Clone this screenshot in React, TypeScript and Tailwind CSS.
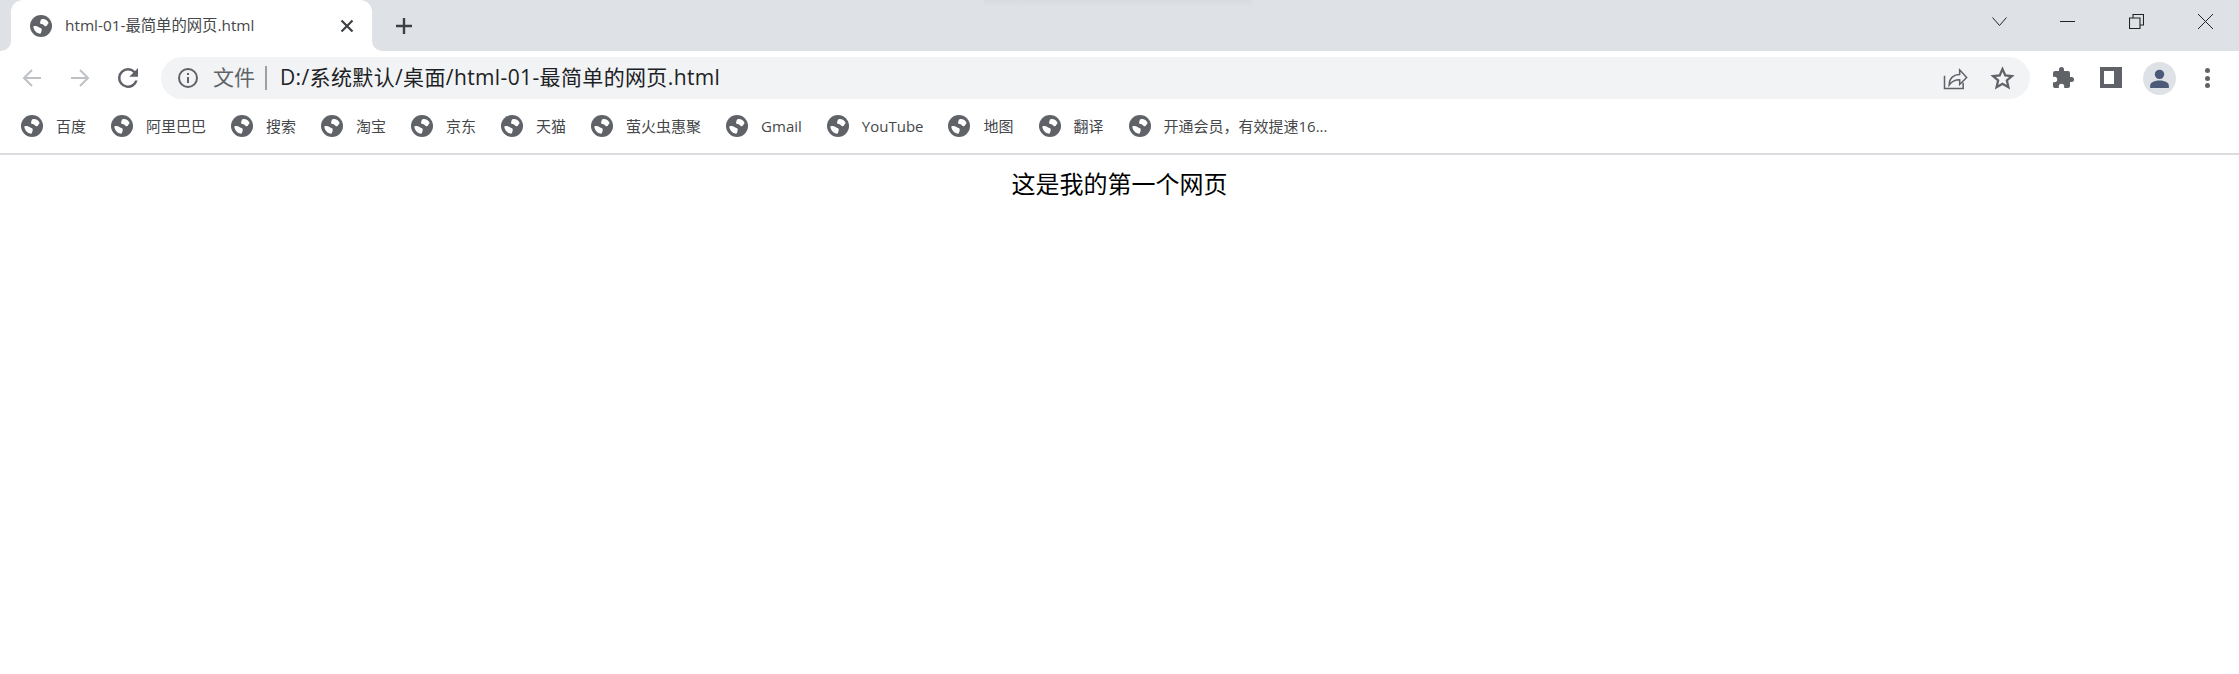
const FONT = { fontFamily: '"Open Sans", "Noto Sans CJK SC", sans-serif' };

const bookmarks = [
  "百度",
  "阿里巴巴",
  "搜索",
  "淘宝",
  "京东",
  "天猫",
  "萤火虫惠聚",
  "Gmail",
  "YouTube",
  "地图",
  "翻译",
  "开通会员，有效提速16...",
];

function Globe({ className }: { className: string }) {
  return (
    <svg viewBox="0 0 24 24" className={className}>
      <circle cx="12" cy="12" r="12" fill="#5f6368" />
      <path
        fill="#fff"
        d="M12.500 4.500c3.500-.6 6.500 1 7.800 4.200l-2.300 3.300c-1.300.6-2.500-.6-3.500-1.500-.8-.7-2.800-.3-3.300-1.300-.5-1.200.3-3.800 1.300-4.700z"
      />
      <path
        fill="#fff"
        d="M3.600 12.500c1.800-.9 4.200-.6 5.500.5 1.200 1 3.300.9 3.600 2.300.3 1.500-.4 4.400-1.400 5.100-3.900-.2-7.300-3.600-7.700-7.900z"
      />
    </svg>
  );
}

function TabStrip() {
  return (
    <div className="relative flex h-[51px] bg-[#dee1e6]">
      <div className="absolute left-[984px] top-0 h-[7px] w-[268px] bg-linear-to-b from-[#d8dbe0] to-transparent" />
      <div className="relative ml-[11px] flex h-[51px] w-[361px] items-center rounded-t-[12px] bg-white pl-[19px]">
        <span className="absolute bottom-0 -left-[10px] h-[10px] w-[10px] bg-white">
          <span className="block h-full w-full rounded-br-[10px] bg-[#dee1e6]" />
        </span>
        <span className="absolute bottom-0 -right-[10px] h-[10px] w-[10px] bg-white">
          <span className="block h-full w-full rounded-bl-[10px] bg-[#dee1e6]" />
        </span>
        <Globe className="h-[22px] w-[22px]" />
        <span className="ml-[13px] text-[15.35px] text-[#45474a]">html-01-最简单的网页.html</span>
        <svg viewBox="0 0 16 16" className="ml-auto mr-[17px] h-4 w-4" stroke="#3c4043" strokeWidth="2.2" fill="none">
          <path d="M2.500 2.500l11 11M13.500 2.500l-11 11" />
        </svg>
      </div>
      <svg viewBox="0 0 20 20" className="ml-[22px] mt-[16px] h-5 w-5" stroke="#3c4043" strokeWidth="2.4" fill="none">
        <path d="M10 2v16M2 10h16" />
      </svg>
      <div className="ml-auto flex h-[51px]">
        <svg viewBox="0 0 15 9" className="mr-[53px] mt-[17px] h-[9px] w-[15px]" stroke="#222" strokeWidth="1" fill="none">
          <path d="M.5 .5L7.500 8.500l7-8" />
        </svg>
        <svg viewBox="0 0 15 15" className="mr-[54px] mt-[14px] h-[15px] w-[15px]" stroke="#222" strokeWidth="1" fill="none">
          <path d="M0 7.500h15" />
        </svg>
        <svg viewBox="0 0 15 15" className="mr-[54px] mt-[14px] h-[15px] w-[15px]" stroke="#222" strokeWidth="1.100" fill="none">
          <path d="M.5 4h10.500v10.500H.5zM4 4V.5h10.500V11H11" />
        </svg>
        <svg viewBox="0 0 15 15" className="mr-[26px] mt-[14px] h-[15px] w-[15px]" stroke="#222" strokeWidth="1" fill="none">
          <path d="M0 0l15 15M15 0L0 15" />
        </svg>
      </div>
    </div>
  );
}

function Toolbar() {
  return (
    <div className="flex h-[48px] items-start bg-white pt-[6px]">
      <svg viewBox="0 0 20 20" className="ml-[22px] mt-[11px] h-5 w-5" stroke="#bdc1c6" strokeWidth="2" fill="none">
        <path d="M19 10H2M10 2l-8 8 8 8" />
      </svg>
      <svg viewBox="0 0 20 20" className="ml-[28px] mt-[11px] h-5 w-5" stroke="#bdc1c6" strokeWidth="2" fill="none">
        <path d="M1 10h17M10 2l8 8-8 8" />
      </svg>
      <svg viewBox="0 0 24 24" className="ml-[23px] mt-[6px] h-[30px] w-[30px]" fill="#5f6368">
        <path d="M17.650 6.350A7.960 7.960 0 0 0 12 4a8 8 0 1 0 7.730 10h-2.080A6 6 0 1 1 12 6c1.660 0 3.140.69 4.220 1.780L13 11h7V4l-2.350 2.350z" />
      </svg>
      <div className="ml-[18px] flex h-[42px] w-[1869px] items-center rounded-full bg-[#f1f3f4] pl-[15px]">
        <svg viewBox="0 0 24 24" className="h-[24px] w-[24px]" fill="none" stroke="#5f6368" strokeWidth="2">
          <circle cx="12" cy="12" r="9" />
          <path d="M12 11v6M12 7v2" />
        </svg>
        <span className="ml-[13px] text-[21px] text-[#5f6368]">文件</span>
        <span className="ml-[10px] h-[24px] w-[2px] bg-[#9aa0a6]" />
        <span className="ml-[13px] text-[21px] tracking-[0.37px] text-[#202124]">D:/系统默认/桌面/html-01-最简单的网页.html</span>
        <svg viewBox="0 0 24 24" className="ml-auto h-[28px] w-[28px]" fill="none" stroke="#5f6368" strokeWidth="1.300">
          <path d="M3 10v11h16v-5M7 18c0-6 4-9 9-9V5l6 6.500-6 6v-4c-4 0-7 1.500-9 4.500z" />
        </svg>
        <svg viewBox="0 0 24 24" className="ml-[21px] mr-[15px] h-[25px] w-[25px]" fill="none" stroke="#5f6368" strokeWidth="2.200">
          <path d="M12 3l2.700 6.100 6.300.6-4.800 4.200 1.500 6.400L12 17l-5.700 3.300 1.500-6.400L3 9.700l6.300-.6z" />
        </svg>
      </div>
      <svg viewBox="0 0 24 24" className="ml-[21px] mt-[9px] h-[24px] w-[24px]" fill="#5f6368">
        <path d="M20.500 11H19V7a2 2 0 0 0-2-2h-4V3.500a2.500 2.500 0 0 0-5 0V5H4a2 2 0 0 0-2 2v3.800h1.500a2.700 2.700 0 0 1 0 5.400H2V20a2 2 0 0 0 2 2h3.800v-1.500a2.700 2.700 0 0 1 5.400 0V22H17a2 2 0 0 0 2-2v-4h1.500a2.500 2.500 0 0 0 0-5z" />
      </svg>
      <div className="ml-[25px] mt-[10px] h-[21px] w-[22px] border-[4px] border-r-[8px] border-[#5f6368] bg-white" />
      <div className="ml-[21px] mt-[5px] flex h-[33px] w-[33px] items-center justify-center rounded-full bg-[#dee1e6]">
        <svg viewBox="0 0 24 24" className="h-[25px] w-[25px]" fill="#4a5a78">
          <circle cx="12" cy="8" r="4.500" />
          <path d="M3 21v-2c0-3.500 5-5 9-5s9 1.500 9 5v2z" />
        </svg>
      </div>
      <div className="ml-[29px] mt-[11px] flex flex-col gap-[2.500px]">
        <span className="h-[5px] w-[5px] rounded-full bg-[#5f6368]" />
        <span className="h-[5px] w-[5px] rounded-full bg-[#5f6368]" />
        <span className="h-[5px] w-[5px] rounded-full bg-[#5f6368]" />
      </div>
    </div>
  );
}

function BookmarkBar() {
  return (
    <div className="flex h-[56px] items-center gap-[25px] border-b-2 border-[#dadce0] bg-white pl-[21px]">
      {bookmarks.map((b) => (
        <div key={b} className="flex items-center gap-[13px]">
          <Globe className="h-[22px] w-[22px]" />
          <span className="text-[15px] text-[#45474a]">{b}</span>
        </div>
      ))}
    </div>
  );
}

export default function App() {
  return (
    <div className="h-[674px] w-full overflow-hidden bg-white" style={FONT}>
      <TabStrip />
      <Toolbar />
      <BookmarkBar />
      <p className="mt-[11px] text-center text-[24px] leading-[36px] text-black">这是我的第一个网页</p>
    </div>
  );
}
